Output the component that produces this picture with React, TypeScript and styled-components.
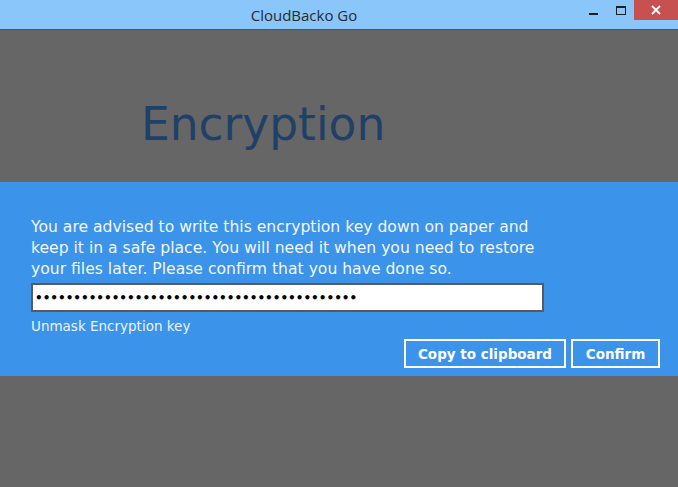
import React from "react";
import styled, { createGlobalStyle } from "styled-components";

const GlobalStyle = createGlobalStyle`
  html, body { margin: 0; padding: 0; background: #666666; }
  body { font-family: "DejaVu Sans", sans-serif; }
  * { box-sizing: border-box; }
`;

const Window = styled.div`
  width: 678px;
  height: 487px;
  display: flex;
  flex-direction: column;
  background: #666666;
  overflow: hidden;
`;

const TitleBar = styled.div`
  height: 30px;
  flex: none;
  display: flex;
  align-items: flex-start;
  background: #8ac6f9;
  border-bottom: 1px solid #4a5563;
`;

const Caption = styled.div`
  flex: 1;
  height: 29px;
  display: flex;
  align-items: center;
  justify-content: center;
  padding-left: 28px;
  font-family: "Open Sans", "Noto Sans", sans-serif;
  font-size: 15px;
  color: #2a2a2a;
`;

const Controls = styled.div`
  display: flex;
  align-items: flex-start;
`;

const CtrlButton = styled.div<{ $close?: boolean; $w: number }>`
  width: ${(p) => p.$w}px;
  height: 20px;
  display: flex;
  align-items: center;
  justify-content: center;
  background: ${(p) => (p.$close ? "#c75050" : "transparent")};
`;

const MinGlyph = styled.span`
  display: block;
  width: 9px;
  height: 2px;
  background: #1e1e1e;
  margin-top: 7px;
`;

const MaxGlyph = styled.span`
  display: block;
  width: 10px;
  height: 9px;
  border: 1px solid #1e1e1e;
  border-top-width: 2px;
`;

const Stage = styled.div`
  flex: 1;
  display: flex;
  flex-direction: column;
`;

const HeadingArea = styled.div`
  height: 152px;
  flex: none;
  padding: 69px 0 0 141px;
`;

const Heading = styled.h1`
  margin: 0;
  font-family: "DejaVu Sans", sans-serif;
  font-weight: normal;
  font-size: 45.5px;
  line-height: 52px;
  color: #1f4068;
`;

const Panel = styled.div`
  height: 194px;
  flex: none;
  background: #3b93ea;
  padding: 35px 18px 8px 31px;
  display: flex;
  flex-direction: column;
`;

const Message = styled.p`
  margin: 0;
  width: 513px;
  font-size: 15.6px;
  line-height: 21px;
  color: #f3f7fc;
`;

const Line = styled.span`
  display: block;
  white-space: nowrap;
`;

const KeyField = styled.input`
  margin-top: 3px;
  width: 513px;
  height: 29px;
  border: 2px solid #5a5a5a;
  background: #ffffff;
  padding: 0 0 0 2px;
  font-family: "DejaVu Sans", sans-serif;
  font-weight: bold;
  font-size: 12px;
  color: #000;
  outline: none;
`;

const Unmask = styled.div`
  margin-top: 6px;
  font-size: 13.5px;
  line-height: 16px;
  color: #eef4fb;
`;

const Actions = styled.div`
  margin-top: 5px;
  display: flex;
  justify-content: flex-end;
  gap: 5px;
`;

const ActionButton = styled.button<{ $w: number }>`
  width: ${(p) => p.$w}px;
  height: 29px;
  border: 2px solid #ffffff;
  background: transparent;
  color: #ffffff;
  font-family: "DejaVu Sans", sans-serif;
  font-weight: bold;
  font-size: 13.5px;
  padding: 0;
  cursor: pointer;
`;

export default function App() {
  const key = "x".repeat(42);
  return (
    <>
      <GlobalStyle />
      <Window>
        <TitleBar>
          <Caption>CloudBacko Go</Caption>
          <Controls>
            <CtrlButton $w={27}>
              <MinGlyph />
            </CtrlButton>
            <CtrlButton $w={27}>
              <MaxGlyph />
            </CtrlButton>
            <CtrlButton $w={44} $close>
              <svg width="10" height="10" viewBox="0 0 10 10">
                <path d="M1 1 L9 9 M9 1 L1 9" stroke="#ffffff" strokeWidth="1.8" />
              </svg>
            </CtrlButton>
          </Controls>
        </TitleBar>
        <Stage>
          <HeadingArea>
            <Heading>Encryption</Heading>
          </HeadingArea>
          <Panel>
            <Message>
              <Line>You are advised to write this encryption key down on paper and</Line>
              <Line>keep it in a safe place. You will need it when you need to restore</Line>
              <Line>your files later. Please confirm that you have done so.</Line>
            </Message>
            <KeyField type="password" value={key} readOnly />
            <Unmask>Unmask Encryption key</Unmask>
            <Actions>
              <ActionButton $w={162}>Copy to clipboard</ActionButton>
              <ActionButton $w={89}>Confirm</ActionButton>
            </Actions>
          </Panel>
        </Stage>
      </Window>
    </>
  );
}
